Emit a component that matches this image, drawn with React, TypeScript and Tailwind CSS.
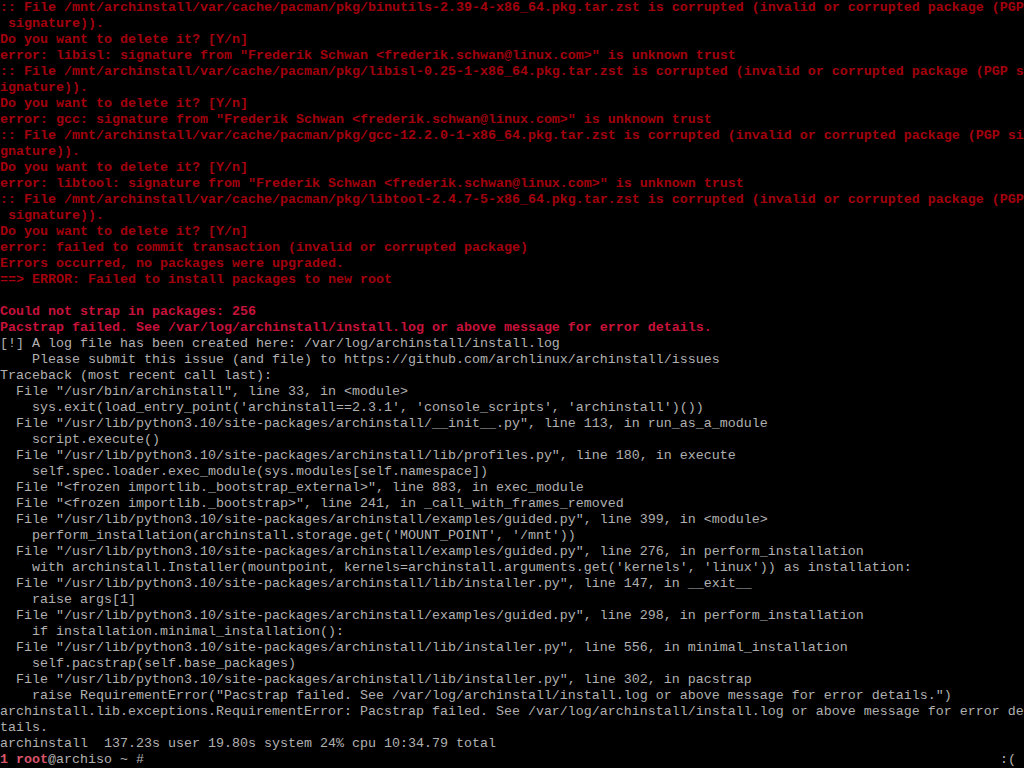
import React from "react";

type Line = { t: string; c: "r" | "R" | "g" };

const P = "/usr/lib/python3.10/site-packages/archinstall";

const lines: Line[] = [
  { t: ":: File /mnt/archinstall/var/cache/pacman/pkg/binutils-2.39-4-x86_64.pkg.tar.zst is corrupted (invalid or corrupted package (PGP", c: "r" },
  { t: " signature)).", c: "r" },
  { t: "Do you want to delete it? [Y/n]", c: "r" },
  { t: 'error: libisl: signature from "Frederik Schwan <frederik.schwan@linux.com>" is unknown trust', c: "r" },
  { t: ":: File /mnt/archinstall/var/cache/pacman/pkg/libisl-0.25-1-x86_64.pkg.tar.zst is corrupted (invalid or corrupted package (PGP s", c: "r" },
  { t: "ignature)).", c: "r" },
  { t: "Do you want to delete it? [Y/n]", c: "r" },
  { t: 'error: gcc: signature from "Frederik Schwan <frederik.schwan@linux.com>" is unknown trust', c: "r" },
  { t: ":: File /mnt/archinstall/var/cache/pacman/pkg/gcc-12.2.0-1-x86_64.pkg.tar.zst is corrupted (invalid or corrupted package (PGP si", c: "r" },
  { t: "gnature)).", c: "r" },
  { t: "Do you want to delete it? [Y/n]", c: "r" },
  { t: 'error: libtool: signature from "Frederik Schwan <frederik.schwan@linux.com>" is unknown trust', c: "r" },
  { t: ":: File /mnt/archinstall/var/cache/pacman/pkg/libtool-2.4.7-5-x86_64.pkg.tar.zst is corrupted (invalid or corrupted package (PGP", c: "r" },
  { t: " signature)).", c: "r" },
  { t: "Do you want to delete it? [Y/n]", c: "r" },
  { t: "error: failed to commit transaction (invalid or corrupted package)", c: "r" },
  { t: "Errors occurred, no packages were upgraded.", c: "r" },
  { t: "==> ERROR: Failed to install packages to new root", c: "r" },
  { t: "", c: "r" },
  { t: "Could not strap in packages: 256", c: "R" },
  { t: "Pacstrap failed. See /var/log/archinstall/install.log or above message for error details.", c: "R" },
  { t: "[!] A log file has been created here: /var/log/archinstall/install.log", c: "g" },
  { t: "    Please submit this issue (and file) to https://github.com/archlinux/archinstall/issues", c: "g" },
  { t: "Traceback (most recent call last):", c: "g" },
  { t: '  File "/usr/bin/archinstall", line 33, in <module>', c: "g" },
  { t: "    sys.exit(load_entry_point('archinstall==2.3.1', 'console_scripts', 'archinstall')())", c: "g" },
  { t: `  File "${P}/__init__.py", line 113, in run_as_a_module`, c: "g" },
  { t: "    script.execute()", c: "g" },
  { t: `  File "${P}/lib/profiles.py", line 180, in execute`, c: "g" },
  { t: "    self.spec.loader.exec_module(sys.modules[self.namespace])", c: "g" },
  { t: '  File "<frozen importlib._bootstrap_external>", line 883, in exec_module', c: "g" },
  { t: '  File "<frozen importlib._bootstrap>", line 241, in _call_with_frames_removed', c: "g" },
  { t: `  File "${P}/examples/guided.py", line 399, in <module>`, c: "g" },
  { t: "    perform_installation(archinstall.storage.get('MOUNT_POINT', '/mnt'))", c: "g" },
  { t: `  File "${P}/examples/guided.py", line 276, in perform_installation`, c: "g" },
  { t: "    with archinstall.Installer(mountpoint, kernels=archinstall.arguments.get('kernels', 'linux')) as installation:", c: "g" },
  { t: `  File "${P}/lib/installer.py", line 147, in __exit__`, c: "g" },
  { t: "    raise args[1]", c: "g" },
  { t: `  File "${P}/examples/guided.py", line 298, in perform_installation`, c: "g" },
  { t: "    if installation.minimal_installation():", c: "g" },
  { t: `  File "${P}/lib/installer.py", line 556, in minimal_installation`, c: "g" },
  { t: "    self.pacstrap(self.base_packages)", c: "g" },
  { t: `  File "${P}/lib/installer.py", line 302, in pacstrap`, c: "g" },
  { t: '    raise RequirementError("Pacstrap failed. See /var/log/archinstall/install.log or above message for error details.")', c: "g" },
  { t: "archinstall.lib.exceptions.RequirementError: Pacstrap failed. See /var/log/archinstall/install.log or above message for error de", c: "g" },
  { t: "tails.", c: "g" },
  { t: "archinstall  137.23s user 19.80s system 24% cpu 10:34.79 total", c: "g" },
];

const cls = {
  r: "text-[#a4000e] font-bold",
  R: "text-[#c8123a] font-bold",
  g: "text-[#b0b0b0]",
};

export default function App() {
  return (
    <div
      className="w-[1024px] h-[768px] bg-black overflow-hidden flex flex-col text-[13.333px] leading-4"
      style={{ fontFamily: '"Liberation Mono", "DejaVu Sans Mono", monospace' }}
    >
      {lines.map((l, i) => (
        <div key={i} className={`h-4 whitespace-pre ${cls[l.c]}`}>
          {l.t}
        </div>
      ))}
      <div className="h-4 whitespace-pre flex justify-between pr-2 text-[#b0b0b0]">
        <span>
          <span className="text-[#d85468] font-bold">1 root</span>
          <span>@archiso ~ #</span>
        </span>
        <span>:(</span>
      </div>
    </div>
  );
}
